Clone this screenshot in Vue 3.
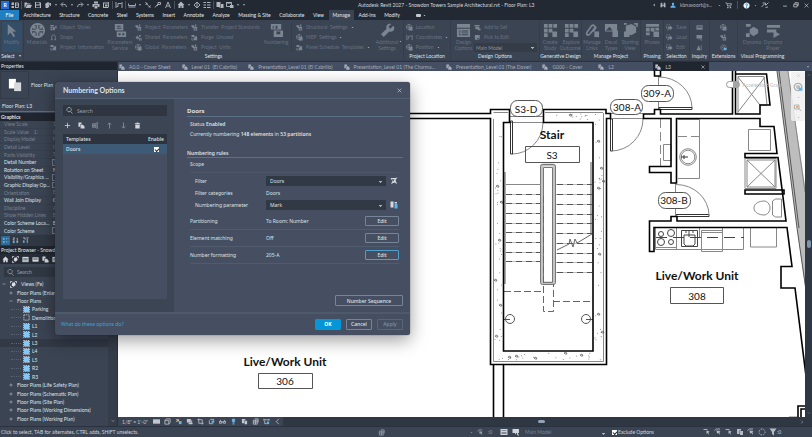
<script setup>
import { h, ref } from 'vue'

// Icon shapes on a 16 x 16 grid: f = filled, s = stroked, b = filled blue, w = filled white
const icons = {
  home: [['f', 'M1 3h5v5H1zM1 10h5v4H1zM8 3h2v11H8z'], ['s', 'M10 4h5v9h-5M10 8h5']],
  open: [['f', 'M1 3h5l1 2h6v2H5l-3 6H1zM6 8h10l-3 6H3z']],
  save: [['f', 'M2 2h10l2 2v10H2zM4 3v4h7V3zM4 9v4h8V9z']],
  sync: [['f', 'M2 6l6-4 4 3-3 2 2 3-3 4H3V9z'], ['s', 'M9 9l4-5v6']],
  undo: [['s', 'M13 12C13 7 9 6 3 7M6 3L2 7l4 4']],
  redo: [['s', 'M3 12C3 7 7 6 13 7M10 3l4 4-4 4']],
  print: [['f', 'M4 1h8v4H4zM1 6h14v6h-3V9H4v3H1zM5 10h6v5H5z']],
  sheet: [['f', 'M2 3h10v2H4v7h8v2H2zM6 7h5v4H6z'], ['s', 'M13 2v11']],
  align: [['s', 'M2 2v12M14 2v12M3 11h3V5h7']],
  measure: [['s', 'M1 5v4h14V5M1 12h14']],
  dim: [['s', 'M3 2l4 6 6 5M3 8l4-4M10 13l3-4']],
  tag: [['s', 'M2 13l5-6h6V3H8v5l-2 2']],
  text: [['s', 'M3 14L8 2l5 12M5 10h6']],
  house: [['f', 'M8 1l7 7h-2v6H9v-4H7v4H3V8H1z']],
  section: [['s', 'M8 2l6 6-6 6-6-6zM8 2v12']],
  lines: [['f', 'M1 2h5v2H1zM8 2h7v2H8zM1 7h5v2H1zM8 7h7v2H8zM1 12h5v2H1zM8 12h7v2H8z']],
  close: [['f', 'M1 2h8v10H1zM10 6h5v8H6v-1h4z']],
  windows: [['s', 'M1 3h10v8H1z'], ['f', 'M1 2h10v3H1zM8 8h7v6H8z']],
  caret: [['f', 'M3 5h10l-5 6z']],
  cleft: [['f', 'M11 2v12L5 8z']],
  chevd: [['s', 'M3 5l5 5 5-5']],
  chevu: [['s', 'M3 11l5-5 5 5']],
  chevr: [['s', 'M5 2l6 6-6 6']],
  chevl: [['s', 'M11 2L5 8l6 6']],
  binoc: [['f', 'M2 2h4v5h4V2h4l1 12h-5v-4H6v4H1z']],
  person: [['b', 'M5 5a3 4 0 0 1 6 0a3 4 0 0 1-6 0M1 15c0-4 3-6 7-6s7 2 7 6z']],
  cart: [['s', 'M1 2h3l2 7h7l2-5H5'], ['f', 'M5 11h3v3H5zM11 11h3v3h-3z']],
  help: [['w', 'M8 1a7 7 0 1 0 .1 0z'], ['k', 'M5 5c1-3 6-2 6 1 0 2-2 2-2 4H7c0-3 2-2 2-4 0-1-2-1-2 0zM7 11h2v2H7z']],
  spark: [['s', 'M1 12l6-6M3 4h6v5M15 3l-5 5M9 13l5-1']],
  min: [['s', 'M3 11h10']],
  restore: [['s', 'M5 5V2h9v7h-3M2 6h9v7H2z']],
  x: [['s', 'M2 2l12 12M14 2L2 14']],
  arrow: [['f', 'M4 1l9 8H9l3 5-2 1-3-5-3 3z']],
  materials: [['s', 'M8 1a7 7 0 1 0 .1 0zM1 8h14M8 1v14'], ['f', 'M3 3h3v3H3zM10 3h3v3h-3zM6 6h4v4H6zM3 10h3v3H3zM10 10h3v3h-3z']],
  service: [['f', 'M2 1h9v7H2zM4 9h10v6H4z'], ['d', 'M4 3h4v1H4zM4 5h5v1H4zM6 11h2v2H6zM10 11h2v2h-2z']],
  objstyle: [['f', 'M1 2h8v3H1zM1 6h5v3H1zM1 10h5v4H1zM7 7h4v7H7zM12 4h3v6h-3z']],
  snaps: [['s', 'M4 14V6a4 4 0 0 1 8 0v8M2 13h4M10 13h4']],
  info: [['f', 'M1 2h7v5H1zM9 5h5v9H6V8h3z'], ['s', 'M2 9v5h3']],
  param: [['f', 'M1 3h6v4H1zM5 6h9v9H6V9H2zM9 1h3v4H9z'], ['d', 'M8 9h4v1H8zM8 12h4v1H8z']],
  shared: [['f', 'M1 8l5-5v3h3v4H6v3zM9 2h4v4H9zM9 9h6v6H9z'], ['d', 'M11 11h2v2h-2z']],
  globe: [['s', 'M7 1a6 6 0 1 0 .1 0zM1 7h12M7 1v12'], ['f', 'M7 7h8v8H7z']],
  numbering: [['f', 'M2 1h11v6H2zM5 8h10v7H5z'], ['d', 'M4 3h1v3H4zM7 3h2v3H7zM8 9h4v3H8z']],
  wrench: [['f', 'M14 3l-3 3-2-2 3-3c-4-1-6 2-5 5L1 12l3 3 6-6c3 1 6-1 5-5z']],
  options: [['f', 'M1 1h14v4H1zM1 6h14v9H1z'], ['d', 'M3 8h2v1H3zM6 8h7v1H6zM3 10h2v1H3zM6 10h7v1H6zM3 12h2v1H3zM6 12h7v1H6z']],
  add: [['f', 'M1 2h12v3H1zM3 6h9v6H3zM9 10h6v4H9z']],
  pick: [['f', 'M2 2h11v7H8v4H2z'], ['s', 'M9 14l5-5']],
  grid: [['f', 'M1 1h4v4H1zM6 1h4v4H6zM11 1h4v4h-4zM1 6h4v4H1zM6 6h4v4H6zM1 11h4v4H1zM10 9h5v6h-5z']],
  link: [['s', 'M2 10l5-7c2-2 5 1 3 3l-5 6c-2 2-4 0-3-2zM9 9l3-5'], ['f', 'M10 9h5v6h-5z']],
  decal: [['f', 'M1 1h13v8H1zM9 8h6v7H9z'], ['d', 'M2 8l4-4 3 4z']],
  view3: [['f', 'M3 3l6-2 5 3v6l-5 3-6-2zM1 9h6v6H1z'], ['s', 'M1 1h3M12 1h3v3']],
  phases: [['f', 'M1 1h14v3H1zM1 5h4v4H1zM6 5h4v4H6zM11 5h4v3h-4zM1 10h4v3H1zM9 9h6v6H9z']],
  sel: [['s', 'M1 2h3M6 2h3M1 5v5M3 13h4'], ['f', 'M4 6h5V3l6 6-6 5v-3H4z']],
  box: [['f', 'M1 3h14v10H1z'], ['d', 'M3 5h10v1H3zM3 8h10v1H3z']],
  note: [['f', 'M1 2h13v8H9l-3 3v-3H1z'], ['s', 'M11 10v4h3']],
  warn: [['f', 'M6 3l5 11H1z'], ['s', 'M12 3v11']],
  dynamo: [['f', 'M1 1h5v3H1zM9 4l5 3v4l-5 3-4-3V7zM1 11h4v4H1z']],
  player: [['f', 'M1 2h14v3H1zM1 7h10v3H1zM8 8l7 4-7 4z']],
  pages: [['f', 'M1 1h8v11H1z'], ['l', 'M7 5h8v10H7z']],
  search: [['s', 'M7 1a5 5 0 1 0 .1 0zM10 10l5 5']],
  plus: [['s', 'M8 2v12M2 8h12']],
  minus: [['s', 'M2 8h12']],
  copy: [['f', 'M1 1h7v4H5v6H1zM6 6h5l4 4v5H6z']],
  rename: [['s', 'M1 4h8v8H1zM12 2v12M10 2h4M10 14h4'], ['f', 'M3 6h5v4H3z']],
  up: [['s', 'M8 15V2M4 6l4-4 4 4']],
  down: [['s', 'M8 1v13M4 10l4 4 4-4']],
  trash: [['f', 'M2 3h4V1h4v2h4v2H2zM3 6h10v9H3z']],
  filteredit: [['f', 'M1 2l9 0 5-1-4 5 3 8-5-3-7 3 3-6z'], ['d', 'M4 4l5 1-3 4z']],
  paramedit: [['f', 'M1 1h6v12H1zM9 2h5v3H9z'], ['b', 'M9 6h6v9H9z']],
  tree1: [['b', 'M2 2h4v4H2zM2 9h4v4H2z'], ['s', 'M9 4h3M14 4h1M9 11h3M14 11h1']],
  sortaz: [['s', 'M2 2h4l-4 5h4M12 2v11M10 10l2 3 2-3'], ['b', 'M2 9h4v5H2z']],
  sortgr: [['s', 'M2 2h5v4M10 2h5M12 4v10'], ['b', 'M2 8h4v5H2z']],
  views: [['s', 'M1 5V1h4M11 1h4v4M1 11v4h4'], ['f', 'M5 4l6-1 2 6-5 4-4-3z']],
  table: [['f', 'M1 2h14v12H1z'], ['d', 'M3 5h10v1H3zM3 8h10v1H3zM3 11h10v1H3z']],
  plan: [['p', 'M2 2h12v12H2z'], ['z', 'M1 1h14v14H1z']],
  demo: [['z', 'M2 2h12v12H2z']],
  rect: [['f', 'M0 3h16v10H0z']],
  cube: [['s', 'M2 6h9v8H2zM2 6l3-4h9v8l-3 4']],
  sun: [['o', 'M4 3h5v5H4z'], ['s', 'M2 2l2 2M9 2L8 4M2 9l2-1'], ['b', 'M9 7h6v7H9z']],
  shadow: [['f', 'M2 2h9v8H2zM6 11h9v3H6zM12 5h2v6h-2z']],
  crop: [['s', 'M4 1v11h11M1 4h11v11']],
  cropb: [['s', 'M3 5v8h9M5 3h8v8'], ['b', 'M8 6h4v5H8z']],
  glasses: [['s', 'M1 8h5v4H1zM10 8h5v4h-5zM6 9h4M2 8l2-4M14 8l-2-4']],
  bulb: [['b', 'M4 5a4 4 0 0 1 8 0c0 3-2 3-2 6H6c0-3-2-3-2-6zM6 12h4v3H6z']],
  pin: [['f', 'M2 2h8v3H7v7H2zM8 6h6v8H8z']],
  rev: [['s', 'M3 5h9v9H3zM3 9h9M8 5v9M6 2h8v8']],
  constr: [['s', 'M2 4h12M2 2v4M14 2v4M4 6v7h5'], ['b', 'M9 8h5v6H9z']],
  cursor1: [['s', 'M1 3h8'], ['f', 'M7 5l6 2-2 2 1 5-3-4-2 2z']],
  cursor2: [['s', 'M1 5l4-3h7'], ['f', 'M5 5l8 1-2 2 1 6-3-4-3 1z']],
  gear: [['z', 'M8 2a6 6 0 1 0 .1 0z']],
  funnel: [['f', 'M1 1h14L10 8v7l-4-3V8z']],
  wheel: [['s', 'M8 2a6 6 0 1 0 .1 0zM8 6a2 2 0 1 0 .1 0z'], ['b', 'M9 9h6v5H9z']],
  zoomr: [['s', 'M1 2h9v8H1zM10 9l4 5'], ['o', 'M4 4h5v4H4z']]
}
const fills = { f: 'currentColor', b: '#62b5ea', p: '#84c6f6', w: '#f1f5fa', k: '#2586c8', d: '#3b4453', l: '#d5d8dc', o: '#e2b27c' }
const Ic = (p) =>
  h('svg', { viewBox: '0 0 16 16', width: p.size || 8, height: p.size || 8, 'aria-hidden': 'true' },
    icons[p.name].map(([k, d]) =>
      h('path', k === 's' || k === 'z'
        ? { d, fill: 'none', stroke: 'currentColor', 'stroke-width': 1.8, 'stroke-dasharray': k === 'z' ? '3 2' : null }
        : { d, fill: fills[k] })))

const quick = ['home', '|', 'open', 'save', 'sync', 'caret', 'undo', 'caret', 'redo', 'caret', 'print', 'sheet', '|', 'align', '|', 'measure', 'caret', 'dim', 'tag', 'text', '|', 'house', 'caret', 'section', 'lines', '|', 'close', 'windows', 'caret', 'caret']
const menu = ['File', 'Architecture', 'Structure', 'Concrete', 'Steel', 'Systems', 'Insert', 'Annotate', 'Analyze', 'Massing & Site', 'Collaborate', 'View', 'Manage', 'Add-Ins', 'Modify']

const groups = [
  { id: 'g-select', label: 'Select', caret: true, cols: [{ big: 'Modify', icon: 'arrow', on: true }] },
  {
    id: 'g-settings', label: 'Settings', cols: [
      { big: 'Materials', icon: 'materials' },
      { id: 'c-styles', rows: [['objstyle', 'Object  Styles'], ['snaps', 'Snaps'], ['info', 'Project  Information']] },
      { big: 'Parameters Service', icon: 'service' },
      { id: 'c-params', rows: [['param', 'Project  Parameters'], ['shared', 'Shared  Parameters'], ['globe', 'Global  Parameters']] },
      { id: 'c-transfer', rows: [['param', 'Transfer  Project Standards'], ['info', 'Purge  Unused'], ['param', 'Project  Units']] },
      { big: 'Numbering', icon: 'numbering', last: true },
      { id: 'c-struct', rows: [['param', 'Structural  Settings', 1], ['globe', 'MEP  Settings', 1], ['info', 'Panel Schedule  Templates', 1]] },
      { big: 'Additional Settings', icon: 'wrench', caret: true }
    ]
  },
  { id: 'g-location', label: 'Project Location', cols: [{ id: 'c-loc', rows: [['globe', 'Location'], ['align', 'Coordinates', 1], ['globe', 'Position', 1]] }] },
  { id: 'g-design', label: 'Design Options', cols: [{ big: 'Design Options', icon: 'options' }, { id: 'c-design', rows: [['add', 'Add to Set'], ['pick', 'Pick to Edit']], select: 'Main Model' }] },
  { id: 'g-gen', label: 'Generative Design', cols: [{ big: 'Create Study', icon: 'grid' }, { big: 'Explore Outcomes', icon: 'grid' }] },
  { id: 'g-manage', label: 'Manage Project', cols: [{ big: 'Manage Links', icon: 'link' }, { big: 'Decal Types', icon: 'decal' }, { big: 'Starting View', icon: 'view3' }] },
  { id: 'g-phase', label: 'Phasing', cols: [{ big: 'Phases', icon: 'phases' }] },
  { id: 'g-sel', label: 'Selection', cols: [{ rows: [['sel', 'Save'], ['sel', 'Load'], ['sel', 'Edit']] }] },
  { id: 'g-inq', label: 'Inquiry', cols: [{ id: 'c-mid', rows: [['box', ''], ['note', ''], ['warn', '']] }] },
  { id: 'g-ext', label: 'Extensions', cols: [{ id: 'c-mid', rows: [['globe', ''], ['param', ''], ['wheel', '']] }] },
  { id: 'g-vis', label: 'Visual Programming', cols: [{ big: 'Dynamo', icon: 'dynamo' }, { big: 'Dynamo Player', icon: 'player' }] }
]

const docs = ['A0.0 - Cover Sheet', 'Level 01  (El Cabrillo)', 'Presentation_Level 01 (El Cabrillo)', 'Presentation_Level 01 (The Charma...', 'Presentation_Level 01 (The Dover)', 'G000 - Cover', 'L2', 'L3']

const props = [
  ['View Scale', '1'], ['Scale Value    1:', '9'], ['Display Model', 'N'], ['Detail Level', 'C'], ['Parts Visibility', 'S'],
  ['Detail Number', '1', 1, 1], ['Rotation on Sheet', 'N', 1], ['Visibility/Graphics ...', '', 1, 1], ['Graphic Display Op...', '', 1, 1],
  ['Orientation', 'B'], ['Wall Join Display', 'C', 1], ['Discipline', 'A'], ['Show Hidden Lines', 'B'], ['Color Scheme Loca...', 'B', 1], ['Color Scheme', '', 1, 1]
]
const tree = [
  [0, 'minus', 'Views (Fe)', 'views'], [1, 'plus', 'Floor Plans (Enlarged)'], [1, 'minus', 'Floor Plans'],
  [2, '', 'Parking', 'plan'], [2, '', 'Demolition', 'demo'], [2, '', 'L1', 'plan'], [2, '', 'L2', 'plan'], [2, '', 'L3', 'plan'],
  [2, '', 'L4', 'plan'], [2, '', 'L5', 'plan'], [2, '', 'R2', 'plan'], [2, '', 'R3', 'plan'],
  [1, 'plus', 'Floor Plans (Life Safety Plan)'], [1, 'plus', 'Floor Plans (Schematic Plan)'], [1, 'plus', 'Floor Plans (Site Plan)'],
  [1, 'plus', 'Floor Plans (Working Dimensions)'], [1, 'plus', 'Floor Plans (Working Plan)']
]
const viewIcons = ['rect', 'cube', 'sun', 'shadow', 'crop', 'cropb', 'glasses', 'bulb', 'pin', 'rev', 'constr', 'chevl']
const rules = [['Partitioning', 'To Room: Number'], ['Element matching', 'Off'], ['Number formatting', '205-A']]

const leftTreads = [194, 203, 213, 223, 232, 242, 252, 261]
const rightTreads = [184, 194, 204, 214, 223, 233, 243, 253, 262, 272]

// Concrete speckle scattered inside the four stair walls
let seed = 7
const rnd = () => (seed = (seed * 16807) % 2147483647) / 2147483647
const scatter = (n, x, y, w, ht) => Array.from({ length: n }, () => [x + rnd() * w, y + rnd() * ht])
const specks = [...scatter(30, 495, 124, 7, 234), ...scatter(30, 595, 124, 7, 234), ...scatter(20, 497, 353, 104, 7), ...scatter(14, 546, 113, 54, 7)]
const stones = [[496, 186], [500, 202], [498, 240], [494, 280], [499, 305], [495, 336], [597, 141], [600, 168], [602, 181], [597, 188], [598, 254], [597, 314], [601, 332], [515, 356], [534, 358], [564, 353], [569, 115], [508, 357], [580, 355]]

const enabled = ref(true)
const exclude = ref(true)
</script>

<template>
  <div class="app">
    <header class="title">
      <div class="quick">
        <span class="logo">R</span>
        <template v-for="(q, i) in quick" :key="i">
          <i v-if="q === '|'" class="sep"></i>
          <button v-else :class="{ car: q === 'caret' }"><Ic :name="q" :size="q === 'caret' ? 4 : 8" /></button>
        </template>
      </div>
      <div class="name">Autodesk Revit 2027 - Snowdon Towers Sample Architectural.rvt - Floor Plan: L3</div>
      <div class="account">
        <Ic name="cleft" :size="4" /><Ic name="binoc" :size="6" /><Ic name="person" :size="6" />
        <span class="user">kbnavoort@s...</span><Ic name="caret" :size="3" /><Ic name="cart" :size="7" />
        <i class="sep"></i><Ic name="help" :size="7" /><Ic name="caret" :size="3" /><Ic name="spark" :size="8" />
      </div>
      <div class="winbtns">
        <button><Ic name="min" :size="6" /></button><button><Ic name="restore" :size="6" /></button><button><Ic name="x" :size="5" /></button>
      </div>
    </header>

    <nav class="menu">
      <div class="tabs"><a v-for="m in menu" :key="m" href="#" :class="{ file: m === 'File', on: m === 'Manage' }">{{ m }}</a></div>
      <span class="extra"><b></b><Ic name="caret" :size="3" /></span>
    </nav>

    <section class="ribbon">
      <div v-for="g in groups" :key="g.id" class="group" :class="g.id">
        <div class="cols">
          <template v-for="(c, i) in g.cols" :key="i">
            <button v-if="c.big" class="big" :class="{ on: c.on, last: c.last }">
              <Ic :name="c.icon" :size="15" /><span>{{ c.big }}</span><Ic v-if="c.caret" class="bc" name="caret" :size="3" />
            </button>
            <div v-else class="stack" :class="c.id">
              <button v-for="(r, j) in c.rows" :key="j"><Ic :name="r[0]" :size="7" /><span v-if="r[1]">{{ r[1] }}</span><Ic v-if="r[2]" name="caret" :size="3" /></button>
              <select v-if="c.select" aria-label="Active design option"><option>{{ c.select }}</option></select>
            </div>
          </template>
        </div>
        <div class="glabel">{{ g.label }}<Ic v-if="g.caret" name="caret" :size="4" /></div>
      </div>
    </section>

    <div class="work">
      <aside class="side">
        <h2 class="bar">Properties</h2>
        <div class="type"><span class="thumb"><Ic name="pages" :size="14" /></span>Floor Plan</div>
        <div class="inst">Floor Plan: L3</div>
        <h3 class="bar cat">Graphics</h3>
        <div class="props">
          <div v-for="p in props" :key="p[0]" :class="{ live: p[2] }"><span>{{ p[0] }}</span><em :class="{ boxed: p[3] }">{{ p[1] }}</em></div>
        </div>
        <div class="sorts"><button class="on"><Ic name="tree1" :size="7" /></button><button><Ic name="sortaz" :size="7" /></button><button><Ic name="sortgr" :size="7" /></button></div>
        <h2 class="bar">Project Browser - Snowdon Towers</h2>
        <div class="ptools"><Ic name="house" :size="7" /><Ic name="views" :size="7" /><Ic name="table" :size="7" /><Ic name="box" :size="7" /><Ic name="copy" :size="7" /><Ic name="table" :size="7" /></div>
        <label class="find"><Ic name="search" :size="7" /><input type="text" placeholder="Search" /></label>
        <div class="treewrap">
          <ul class="tree">
            <li v-for="t in tree" :key="t[2]" :class="['lv' + t[0], { cur: t[2] === 'L3' }]">
              <Ic v-if="t[1]" :name="t[1]" :size="4" /><Ic v-if="t[3]" :name="t[3]" :size="7" /><span>{{ t[2] }}</span>
            </li>
          </ul>
          <div class="tscroll"><Ic name="chevd" :size="4" /></div>
        </div>
      </aside>

      <main class="main">
        <div class="docs">
          <a v-for="d in docs" :key="d" href="#" :class="{ on: d === 'L3' }"><Ic name="copy" :size="6" />{{ d }}<Ic v-if="d === 'L3'" class="cx" name="x" :size="4" /></a>
          <Ic class="dcar" name="caret" :size="4" />
        </div>
        <div class="stage">
          <div class="canvas">
            <svg class="plan" role="img" aria-label="Floor plan L3">
              <g transform="translate(-118 -71)" fill="none" stroke="#111">
                <path d="M777 71h11L806 192v102l-9-66z" fill="#bdbdbd" stroke="none" />
                <path d="M777 71L797 228l9 62M779 71l20 157" stroke="#555" stroke-width="1" />
                <path d="M788 71l17 121" stroke="#888" />

                <!-- thin fixtures and furniture -->
                <g stroke="#888" stroke-width="1">
                  <path d="M493.500 119V361.500H603.500V113M493.500 112.500H508M545 112.500H603" />
                  <path d="M509 116.500H543M509 122.500H543M512 154A31 32 0 0 0 543 123" />
                  <path d="M510.500 121h2v33h-2zM610.500 119h2v32h-2z" stroke="#333" />
                  <path d="M612 151A32 32 0 0 0 643 119M611 113.500H643M611 118.500H643" />
                  <path d="M658.500 76V110M659 77A33 31 0 0 1 692 108" />
                  <path d="M659 107.500h33v2h-33zM676 214.500h33v2h-33z" stroke="#333" />
                  <path d="M675.500 183V217M676 184.500A33 31 0 0 1 709 215" />
                  <path d="M525.500 146.500h54v16h-54zM670.500 287.500h53v16h-53zM258.500 373.500h54v15h-54z" stroke="#555" />
                  <path d="M738 76.500H764L767 105H760M738 76.500V113M738 77L760 105M765 77L738 112" />
                  <path d="M663.500 144.500H671V160.500H663.500z" />
                  <path d="M678 119.500H699.500V178.500H678" />
                  <path d="M660.500 119V166M678 136.500H699" stroke-dasharray="9 4" />
                  <circle cx="688" cy="157" r="8.300" /><circle cx="688" cy="157" r="6.800" />
                  <path d="M681 157h7M684 155v4" stroke="#333" />
                  <path d="M748.500 129.500h22v21h-22zM745 158.500h31v30h-31zM747 160h28v27h-28zM747 160l28 27M775 160l-28 27" />
                  <path d="M772.500 201l3-2h6v18h-6l-3-2z" />
                  <path d="M754 208c0-5 6-7 10-7 3 0 6 3 6 7s-3 7-6 7c-4 0-10-2-10-7z" />
                  <path d="M655.500 228V249.500H676.500V228M676 249.500H743.500V228M699.500 228V238M722.500 228V249M655 247.500H676" />
                  <path d="M701.500 230.500h21v21h-21zM701.500 232.500h21M750.500 228v19h26v-19" />
                  <path d="M656 237.500H744" stroke-dasharray="11 6" stroke="#444" />
                  <g stroke="#444">
                    <circle cx="661" cy="234" r="2.500" /><circle cx="671" cy="233" r="3.500" /><circle cx="661" cy="242" r="3.500" /><circle cx="671" cy="242" r="2.500" />
                    <path d="M681.500 230.500h16v16h-16zM684 235h11v9l-2 2h-7l-2-2zM689 231v6M685 232h2M692 232h2" />
                  </g>
                </g>

                <!-- stair -->
                <rect x="541.500" y="165" width="13" height="118" rx="2" stroke="#c4c4c4" stroke-width="3" />
                <rect x="540.500" y="164.500" width="15" height="120" rx="2" stroke="#777" />
                <path d="M543.500 167.500h9v115h-9z" stroke="#777" />
                <path d="M505 172V284M591 162V234" stroke="#aaa" stroke-width="2" />
                <path d="M506 184.500H541" stroke="#888" />
                <g stroke="#bbb"><path v-for="y in leftTreads" :key="y" :d="`M506 ${y}.500H540`" /><path v-for="y in rightTreads" :key="'r' + y" :d="`M556 ${y}.500H592`" /></g>
                <g stroke="#555" stroke-dasharray="6 4"><path v-for="y in leftTreads" :key="y" :d="`M506 ${y}.500H540`" /><path v-for="y in rightTreads" :key="'r' + y" :d="`M557 ${y}.500H592`" /></g>
                <path d="M557 250l12-6 1-5 3 8 2-8 2 4 15-9" stroke="#666" stroke-width="1" />
                <path d="M504 291.500H543M553 301.500H592M543.500 196V311.500H553.500V284" stroke="#666" stroke-dasharray="7 3" />
                <g stroke="#555"><circle cx="510" cy="319" r="4.500" /><circle cx="586" cy="319" r="4.500" /><path d="M504 319.500h6M586 319.500h7" /></g>
                <g fill="#777" stroke="none"><circle v-for="(s, i) in specks" :key="i" :cx="s[0]" :cy="s[1]" r="0.500" /></g>
                <path v-for="(s, i) in stones" :key="'s' + i" :d="`M${s[0]} ${s[1]}l2-1 1 2-2 0z`" stroke="#555" stroke-width="0.700" />

                <!-- cut walls -->
                <g stroke="#000" stroke-width="1.600">
                  <path d="M118 113.500H490.500V109.500H509.500V122.500H503.500V351H593V122.500H543.500V109.500H606V113.500H610.500V118.500H606.500V364.500H490.500V118.500H118" />
                  <path d="M493.500 365V418M503.500 365V418" />
                  <path d="M654.500 71v5h6v-5M732.500 71V114H660.500V109.500H654.500V114H643.500V118.500H671V166.500H649.500V172.500H671V183H676.500V118.500H760V126.500H774L777 153.500H745V157.500H778L786 221H677V216.500H671V221H649.500V251.500H654V227.500H787L792 266.500H781V288H795L806 376" />
                  <path d="M735.500 71V114H760V105H770L766.500 74H735.500" />
                  <path d="M745 190h39v4h-39z" />
                  <path d="M789 417.500H798V406H806M801 417V409H806" />
                </g>

                <!-- tags -->
                <g fill="#fff" stroke="#555">
                  <rect x="510.500" y="100.500" width="32" height="16" rx="7" /><rect x="610.500" y="99.500" width="32" height="15" rx="7" />
                  <rect x="641.500" y="85.500" width="32" height="16" rx="7" /><rect x="658.500" y="192.500" width="32" height="16" rx="7" />
                </g>
                <g fill="#111" stroke="none" text-anchor="middle" class="tagtext">
                  <text x="526" y="113">S3-D</text><text x="627" y="111">308-A</text><text x="657" y="97">309-A</text><text x="674" y="204">308-B</text>
                  <text x="552" y="159">S3</text><text x="697" y="300">308</text><text x="285" y="385">306</text>
                  <g class="room"><text x="552" y="139">Stair</text><text x="697" y="280">Live/Work Unit</text><text x="285" y="366">Live/Work Unit</text></g>
                </g>
              </g>
            </svg>
            <label class="accel"><input type="checkbox" /><span>Accelerated Graphics</span></label>
            <div class="navbar"><Ic name="x" :size="3" /><Ic name="wheel" :size="10" /><Ic name="caret" :size="3" /><Ic name="zoomr" :size="8" /><Ic name="caret" :size="3" /></div>
          </div>
          <div class="vscroll"><Ic name="chevu" :size="4" /><span class="vthumb"></span><Ic name="chevd" :size="4" /></div>
        </div>
        <div class="viewbar">
          <div class="vtools"><span>1/8" = 1'-0"</span><button v-for="v in viewIcons" :key="v"><Ic :name="v" :size="7" /></button></div>
          <div class="htrack"><span class="hthumb"></span></div>
          <Ic name="chevr" :size="4" />
        </div>
      </main>
    </div>

    <footer class="status">
      <span class="hint">Click to select, TAB for alternates, CTRL adds, SHIFT unselects.</span>
      <span class="sync"><Ic name="rev" :size="7" /></span>
      <span class="ed"><Ic name="caret" :size="3" /><Ic name="cursor2" :size="7" />:0</span>
      <Ic name="table" :size="8" /><Ic name="note" :size="8" />
      <select class="model" aria-label="Design option"><option>Main Model</option></select>
      <label class="excl"><input v-model="exclude" type="checkbox" />Exclude Options</label>
      <span class="filters"><Ic name="cursor1" /><Ic name="cursor2" /><Ic name="cursor1" /><Ic name="pin" /><Ic name="cursor2" /><Ic name="gear" /><Ic name="funnel" /></span><span class="count">:0</span>
    </footer>

    <section class="dialog" role="dialog" aria-labelledby="dlg-title">
      <header><h1 id="dlg-title">Numbering Options</h1><button aria-label="Close"><Ic name="x" :size="5" /></button></header>
      <div class="body">
        <div class="left">
          <label class="dsearch"><Ic name="search" :size="7" /><input type="text" placeholder="Search" /></label>
          <div class="acts">
            <button><Ic name="plus" :size="7" /></button><button><Ic name="copy" :size="7" /></button><button class="dim"><Ic name="rename" :size="7" /></button><button class="dim"><Ic name="up" :size="7" /></button><button class="dim"><Ic name="down" :size="7" /></button><button><Ic name="trash" :size="7" /></button>
          </div>
          <div class="list">
            <table>
              <thead><tr><th>Templates</th><th>Enable</th></tr></thead>
              <tbody><tr><td>Doors</td><td><input v-model="enabled" type="checkbox" aria-label="Enable Doors" /></td></tr></tbody>
            </table>
          </div>
        </div>
        <div class="right">
          <h2>Doors</h2>
          <p>Status <b>Enabled</b></p>
          <p>Currently numbering <b>148 elements</b> in <b>53 partitions</b></p>
          <h3>Numbering rules</h3>
          <div class="scope">Scope</div>
          <div class="fields">
            <label for="flt">Filter</label><select id="flt"><option>Doors</option></select><button aria-label="Edit filter"><Ic name="filteredit" /></button>
            <span>Filter categories</span><span class="val">Doors</span><i></i>
            <label for="prm">Numbering parameter</label><select id="prm"><option>Mark</option></select><button aria-label="Edit parameter"><Ic name="paramedit" /></button>
          </div>
          <div v-for="(r, i) in rules" :key="r[0]" class="rule"><span>{{ r[0] }}</span><span>{{ r[1] }}</span><button class="btn" :class="{ focus: i === 2 }">Edit</button></div>
          <button class="btn seq">Number Sequence</button>
        </div>
      </div>
      <footer><a href="#">What do these options do?</a><button class="btn ok">OK</button><button class="btn">Cancel</button><button class="btn off">Apply</button></footer>
    </section>
  </div>
</template>

<style>
html, body { background: #3b4453; }
</style>

<style scoped>
* { box-sizing: border-box; }
.app { position: relative; height: 100vh; display: flex; flex-direction: column; overflow: hidden; background: #3b4453; color: #dfe3e9; font: 5px/6px Lato, "Open Sans", sans-serif; white-space: pre; }
svg { flex: none; display: block; }
button, select, input { font: inherit; color: inherit; background: none; border: 0; padding: 0; margin: 0; appearance: none; border-radius: 0; }
a { color: inherit; text-decoration: none; }
h1, h2, h3, p, ul { margin: 0; padding: 0; font: inherit; list-style: none; }
i, em { font-style: normal; }

.title { display: flex; align-items: center; height: 10px; background: #222933; color: #b2b7bf; }
.quick { flex: 0 1 358px; display: flex; align-items: center; }
.quick button { width: 10px; display: flex; justify-content: center; }
.quick button.car { width: 6px; }
.logo { width: 8px; height: 8px; margin: 0 1px; background: #1c73e0; color: #fff; font-weight: 700; text-align: center; line-height: 8px; }
.sep { width: 1px; height: 8px; margin: 0 1px; background: #4a525e; }
.name { flex: 1; color: #d5d8dd; }
.account { display: flex; align-items: center; gap: 4px; width: 130px; }
.user { width: 34px; overflow: hidden; }
.winbtns { display: flex; gap: 5px; width: 30px; color: #e5e7ea; }

.menu { display: flex; height: 10px; background: #222933; line-height: 11px; color: #e6e8ec; }
.tabs { display: flex; justify-content: space-between; width: 404px; }
.tabs a { padding: 0 4px; }
.tabs a.file { width: 19px; background: #1f7fc0; color: #fff; text-align: center; padding: 0; }
.tabs a.on { background: #3b4453; }
.extra { display: flex; align-items: center; gap: 2px; padding-left: 12px; }
.extra b { width: 5px; height: 3px; border-radius: 1px; background: #c5c9cf; }

.ribbon { display: flex; height: 41px; background: #3b4453; color: #677181; border-bottom: 1px solid #38404e; }
.group { display: flex; flex-direction: column; border-right: 1px solid #343d4b; overflow: hidden; flex: none; }
.cols { flex: 1; display: flex; justify-content: center; padding-top: 2px; }
.cols svg { color: #7b8491; }
.glabel { height: 8px; display: flex; justify-content: center; align-items: center; gap: 3px; color: #dfe3e9; }
.big { width: 21px; flex: none; display: flex; flex-direction: column; align-items: center; gap: 1px; padding-top: 1px; white-space: normal; position: relative; }
.big span { text-align: center; }
.big.on { width: 20px; background: #344e68; }
.big .bc { position: absolute; right: -2px; bottom: 9px; color: #c5cad2; }
.stack { display: flex; flex-direction: column; gap: 2px; padding-top: 1px; flex: none; }
.stack button { display: flex; align-items: center; gap: 3px; height: 8px; }
.stack button svg + span + svg { color: #c5cad2; }
.stack select { width: 63px; height: 9px; padding-left: 2px; background: #343c48; color: #8a93a1; }
.g-select { width: 24px; }
.g-settings { width: 380px; }
.g-settings .cols { justify-content: flex-start; }
.g-settings .big { width: 26px; }
.c-styles { width: 57px; }
.c-params { width: 57px; padding-left: 2px; }
.c-transfer { width: 71px; padding-left: 1px; }
.g-settings .big.last { width: 31px; border-right: 1px solid #343d4b; }
.c-struct { width: 82px; padding-left: 4px; }
.g-location { width: 47px; }
.g-design { width: 89px; }
.g-gen { width: 42px; }
.g-manage { width: 59px; }
.g-manage .big { width: 19px; }
.g-phase { width: 23px; }
.g-sel { width: 26px; }
.g-inq { width: 20px; }
.g-ext { width: 28px; }
.g-vis { width: 49px; border-right: 0; }

.work { flex: 1; min-height: 0; display: flex; }
.side { width: 117px; display: flex; flex-direction: column; border-top: 1px solid #2a323f; overflow: hidden; background: #3b4453; }
.bar { height: 8px; padding-left: 1px; line-height: 8px; background: #20262f; color: #e2e5ea; flex: none; overflow: hidden; }
.type { display: flex; align-items: center; gap: 2px; height: 29px; }
.thumb { width: 29px; height: 28px; border: 1px solid #333b48; display: flex; align-items: center; justify-content: center; color: #fff; }
.inst { height: 13px; padding: 4px 2px 0; border-bottom: 1px solid #5a6e88; margin-bottom: 1px; }
.cat { font-weight: 700; }
.props { height: 114px; display: grid; grid-auto-rows: 1fr; color: #78818f; flex: none; }
.props div { display: flex; align-items: center; padding-left: 4px; border-bottom: 1px solid #37404e; min-height: 0; }
.props .live { color: #dfe3e9; }
.props span { width: 48px; }
.props em { flex: 1; padding-left: 1px; align-self: stretch; line-height: 7px; }
.props em.boxed { border: 1px solid #747e8c; line-height: 5px; }
.sorts { display: flex; height: 11px; gap: 1px; padding: 1px; background: #303844; color: #bcc2cb; flex: none; }
.sorts button { width: 9px; height: 9px; display: flex; align-items: center; justify-content: center; }
.sorts .on { background: #2c6c98; }
.ptools { display: flex; gap: 3px; height: 10px; align-items: center; padding-left: 2px; background: #262d37; color: #d5d8dd; flex: none; }
.find { display: flex; align-items: center; gap: 3px; height: 10px; margin: 3px 12px 3px 4px; padding-left: 3px; background: #303844; color: #9aa2ae; flex: none; }
input::placeholder { color: #9aa2ae; opacity: 1; }
input[type='text'] { min-width: 0; flex: 1; height: 8px; }
.treewrap { flex: 1; min-height: 0; display: flex; }
.tree { flex: 1; display: grid; grid-auto-rows: 1fr; padding-bottom: 3px; min-width: 0; }
.tree li { display: flex; align-items: center; gap: 4px; padding-left: 2px; min-height: 0; }
.tree .lv1 { padding-left: 9px; }
.tree .lv2 { padding-left: 11px; gap: 2px; }
.tree .lv2::before { content: ""; width: 10px; border-top: 1px dotted #586272; }
.tree .cur { background: #323a47; }
.tscroll { width: 9px; background: #353d4a; display: flex; align-items: flex-end; justify-content: center; padding-bottom: 3px; }

.main { flex: 1; min-width: 0; display: flex; flex-direction: column; border-left: 1px solid #2a323f; }
.docs { display: flex; height: 10px; background: #454f64; border-top: 1px solid #2a323f; color: #a5adba; }
.docs a { display: flex; align-items: center; gap: 4px; min-width: 56px; padding: 0 10px 0 1px; }
.docs a.on { position: relative; background: #20262f; padding-left: 2px; color: #c5cad2; }
.cx { margin-left: auto; margin-right: -6px; color: #fff; }
.dcar { margin: 3px 2px 0 auto; }
.stage { flex: 1; min-height: 0; display: flex; }
.canvas { flex: 1; position: relative; background: #fff; overflow: hidden; }
.plan { width: 100%; height: 100%; }
.tagtext { font: 10px Lato, sans-serif; }
.room { font-size: 12px; font-weight: 700; }
.accel { position: absolute; right: 16px; top: 10px; display: flex; align-items: center; gap: 3px; color: #bbb; }
.accel input { width: 14px; height: 7px; border-radius: 4px; border: 1px solid #999; background: linear-gradient(90deg, #fff 50%, #a5a5a5 50%); }
.navbar { position: absolute; right: 0; top: 1px; width: 14px; height: 49px; display: flex; flex-direction: column; align-items: center; justify-content: space-between; padding: 2px 0; border-radius: 2px; background: #f0f0f0dd; color: #aaa; }
.vscroll { width: 7px; background: #2f3743; display: flex; flex-direction: column; align-items: center; color: #8f99a8; padding: 2px 0; }
.vthumb { width: 4px; height: 8px; margin: auto 0; border-radius: 2px; background: #7f93ab; }
.viewbar { display: flex; align-items: center; height: 9px; background: #2f3743; color: #c2c7cf; padding-right: 8px; }
.vtools { display: flex; align-items: center; height: 9px; background: #3b4453; padding-left: 4px; }
.vtools span { width: 29px; }
.vtools button { width: 11px; display: flex; justify-content: center; }
.htrack { flex: 1; display: flex; justify-content: center; }
.hthumb { width: 7px; height: 3px; border-radius: 2px; background: #8fa3b8; }

.status { display: flex; align-items: center; height: 11px; border-top: 1px solid #2a323f; gap: 4px; padding-left: 1px; color: #d2d6dc; }
.hint { width: 373px; }
.sync { width: 88px; color: #9aa2ae; }
.ed { display: flex; align-items: center; gap: 4px; width: 26px; color: #9aa2ae; }
.model { width: 84px; padding-left: 1px; color: #79828f; }
.excl { display: flex; align-items: center; gap: 1px; width: 87px; }
.excl input, td input { width: 5px; height: 5px; background: #fff; display: inline-grid; place-items: center; flex: none; }
.excl input:checked::before, td input:checked::before { content: ""; width: 3px; height: 2px; border: solid #222; border-width: 0 0 1px 1px; transform: rotate(-45deg); }
.filters { display: flex; gap: 3px; color: #b5bbc4; }
.count { margin-left: -4px; }
.model, .fields select, .stack select { background-image: linear-gradient(#aab2be, #aab2be), linear-gradient(#aab2be, #aab2be); background-size: 3px 1px, 1px 1px; background-position: right 3px top 4px, right 4px top 5px; background-repeat: no-repeat; }

.dialog { position: absolute; left: 55px; top: 82px; width: 355px; height: 253px; display: flex; flex-direction: column; border-radius: 3px; background: #454f61; color: #dde1e7; font: 5px/6px "Noto Sans", "Open Sans", sans-serif; box-shadow: 0 5px 18px #0006, 0 0 1px #222; }
.dialog header { height: 17px; display: flex; align-items: center; justify-content: space-between; padding: 0 8px; border-bottom: 1px solid #526075; }
.dialog h1 { font: 700 7px/9px Lato, "Noto Sans", sans-serif; }
.body { flex: 1; display: flex; min-height: 0; }
.left { width: 119px; display: flex; flex-direction: column; padding: 6px 7px 13px 8px; background: #3c4554; }
.dsearch { display: flex; align-items: center; gap: 4px; height: 11px; padding-left: 3px; background: #2f3641; color: #b2b8c1; }
.acts { display: flex; gap: 7px; height: 18px; align-items: center; padding-left: 1px; color: #d2d6dc; }
.acts .dim { color: #8f97a3; }
.list { flex: 1; background: #454f61; }
table { width: 100%; border-collapse: collapse; }
th, td { height: 10px; padding: 0 3px; text-align: left; font-weight: 500; }
th { background: #2d3440; }
tbody td { background: #3d5a76; }
th:last-child { text-align: right; }
td:last-child { text-align: right; padding-right: 8px; }
td input { vertical-align: middle; }
.right { flex: 1; display: flex; flex-direction: column; padding: 8px 7px 6px 13px; }
.right h2 { font-size: 6px; font-weight: 700; line-height: 9px; border-bottom: 1px solid #5d7186; margin-bottom: 4px; }
.right p { padding-left: 3px; margin-bottom: 4px; }
.right b { font-weight: 600; }
.right h3 { font-weight: 600; margin-top: 9px; line-height: 7px; border-bottom: 1px solid #5d7186; }
.scope { margin: 3px 4px 0 3px; padding-bottom: 5px; border-bottom: 1px solid #4d5768; }
.fields { display: grid; grid-template-columns: 71px 120px 1fr; grid-template-rows: 10px 10px 10px; row-gap: 2px; align-items: center; margin-top: 3px; padding-left: 8px; }
.fields select { height: 10px; padding-left: 4px; background-color: #313945; width: 100%; background-position: right 4px top 5px, right 5px top 6px; }
.fields button { margin-left: 4px; color: #d5d9df; }
.rule { display: grid; grid-template-columns: 76px 1fr 34px; align-items: center; height: 17px; margin: 0 4px 0 3px; border-bottom: 1px solid #505b6d; }
.fields + .rule { margin-top: 3px; }
.btn { height: 11px; border: 1px solid #76849a; border-radius: 1px; font-weight: 500; text-align: center; }
.rule .btn { height: 10px; }
.btn.focus { border-color: #4d9fce; }
.seq { width: 68px; margin: auto 0 0 auto; }
.dialog footer { height: 23px; display: flex; align-items: center; gap: 5px; padding: 0 7px 1px 6px; border-top: 2px solid #4d5a6c; }
.dialog footer a { flex: 1; color: #3fa4d8; }
.dialog footer .btn { width: 26px; }
.dialog footer .ok { background: #0696d7; border-color: #0696d7; color: #fff; font-weight: 700; }
.dialog footer .off { border-color: #596579; color: #8590a0; }
</style>
